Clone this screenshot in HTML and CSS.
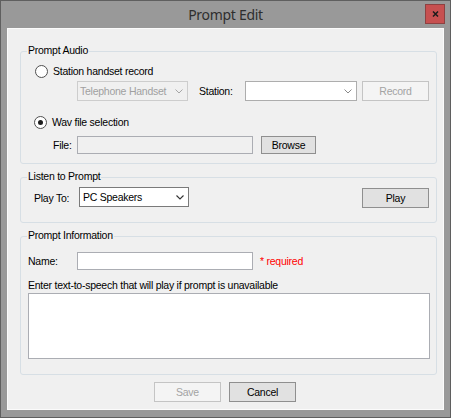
FILE: index.html
```html
<!DOCTYPE html>
<html>
<head>
<meta charset="utf-8">
<link rel="stylesheet" href="styles.css">
</head>
<body>
<div class="window">
  <div class="titlebar">
    <div class="title">Prompt Edit</div>
    <div class="close">
      <svg width="7" height="6" viewBox="0 0 7 6"><path d="M1 0.5 L6 5.5 M6 0.5 L1 5.5" stroke="#1c1c1c" stroke-width="1.5" fill="none"/></svg>
    </div>
  </div>
  <div class="client">
    <div class="group g1">
      <span class="legend">Prompt Audio</span>
      <div class="row radio-row r1"><span class="radio"></span><span>Station handset record</span></div>
      <div class="row combo-row">
        <div class="combo disabled w-tel"><span>Telephone Handset</span><svg class="chev" width="8" height="5" viewBox="0 0 8 5"><polyline points="0.5,0.5 4,4 7.5,0.5" fill="none" stroke="#a6a6a6" stroke-width="1"/></svg></div>
        <span class="lbl lbl-station">Station:</span>
        <div class="combo w-station"><span></span><svg class="chev" width="8" height="5" viewBox="0 0 8 5"><polyline points="0.5,0.5 4,4 7.5,0.5" fill="none" stroke="#8a8a8a" stroke-width="1"/></svg></div>
        <div class="btn disabled btn-record">Record</div>
      </div>
      <div class="row radio-row r2"><span class="radio checked"><span class="dot"></span></span><span>Wav file selection</span></div>
      <div class="row file-row">
        <span class="lbl lbl-file">File:</span>
        <div class="tb ro w-file"></div>
        <div class="btn btn-browse">Browse</div>
      </div>
    </div>

    <div class="group g2">
      <span class="legend">Listen to Prompt</span>
      <div class="row play-row">
        <span class="lbl lbl-play">Play To:</span>
        <div class="combo dark w-play"><span>PC Speakers</span><svg class="chev" width="8" height="5" viewBox="0 0 8 5"><polyline points="0.5,0.5 4,4 7.5,0.5" fill="none" stroke="#333" stroke-width="1.1"/></svg></div>
        <div class="btn btn-play">Play</div>
      </div>
    </div>

    <div class="group g3">
      <span class="legend">Prompt Information</span>
      <div class="row name-row">
        <span class="lbl lbl-name">Name:</span>
        <div class="tb w-name"></div>
        <span class="required">* required</span>
      </div>
      <div class="tts-label">Enter text-to-speech that will play if prompt is unavailable</div>
      <div class="tb textarea"></div>
    </div>

    <div class="actions">
      <div class="btn disabled">Save</div>
      <div class="btn">Cancel</div>
    </div>
  </div>
</div>
</body>
</html>
```

FILE: styles.css
```css
body {
  margin: 0;
}

.window {
  width: 451px;
  height: 418px;
  box-sizing: border-box;
  border: 1px solid #5f5f5f;
  background: #999999;
  display: flex;
  flex-direction: column;
  font-family: "Liberation Sans", Arial, sans-serif;
  font-size: 10.5px;
  letter-spacing: -0.25px;
  color: #000;
}

.titlebar {
  height: 27px;
  flex: none;
  display: grid;
  grid-template-columns: 1fr auto 1fr;
  align-items: start;
}

.title {
  grid-column: 2;
  font-family: "Noto Sans", "Open Sans", sans-serif;
  font-size: 14px;
  letter-spacing: -0.3px;
  line-height: 27px;
  color: #2e2e2e;
}

.close {
  grid-column: 3;
  justify-self: end;
  margin: 3px 5px 0 0;
  width: 20px;
  height: 20px;
  box-sizing: border-box;
  border: 1px solid #8e4141;
  background: #c75050;
  display: flex;
  align-items: center;
  justify-content: center;
}

.client {
  flex: none;
  margin: 0 6px;
  height: 382px;
  box-sizing: border-box;
  border: 1px solid #fbfbfb;
  background: #f0f0f0;
  padding: 22px 6px 0 12px;
}

.group {
  position: relative;
  border: 1px solid #d7dfe5;
  border-radius: 3px;
}

.legend {
  position: absolute;
  left: 6px;
  top: -8px;
  padding: 0 1px;
  background: #f0f0f0;
  line-height: 13px;
  white-space: nowrap;
}

.row {
  display: flex;
  align-items: center;
  white-space: nowrap;
}

/* Prompt Audio */
.g1 {
  padding: 12px 7px 9px 0;
}

.radio-row {
  height: 14px;
  line-height: 13px;
}

.r1 {
  padding-left: 14px;
}

.r2 {
  margin-top: 14px;
  padding-left: 13px;
}

.radio {
  width: 13px;
  height: 13px;
  box-sizing: border-box;
  border: 1px solid #505050;
  border-radius: 50%;
  background: #fff;
  margin-right: 5px;
  display: flex;
  align-items: center;
  justify-content: center;
}

.dot {
  width: 5px;
  height: 5px;
  border-radius: 50%;
  background: #1e1e1e;
}

.combo-row {
  margin-top: 3px;
  height: 20px;
  padding-left: 56px;
}

.combo {
  box-sizing: border-box;
  height: 20px;
  border: 1px solid #adadad;
  background: #fff;
  display: flex;
  align-items: center;
  justify-content: space-between;
  padding: 0 4px 0 2px;
  line-height: 13px;
}

.combo.disabled {
  border-color: #cdcdcd;
  background: #f0f0f0;
  color: #a0a0a0;
}

.combo.dark {
  border-color: #7a7a7a;
}

.chev {
  flex: none;
}

.w-tel {
  width: 111px;
}

.lbl-station {
  width: 57px;
  box-sizing: border-box;
  padding-left: 11px;
}

.w-station {
  width: 112px;
}

.btn {
  box-sizing: border-box;
  width: 67px;
  height: 20px;
  border: 1px solid #8f8f8f;
  background: #e1e1e1;
  display: flex;
  align-items: center;
  justify-content: center;
  line-height: 13px;
  color: #000;
}

.btn.disabled {
  border-color: #c4c4c4;
  background: #f4f4f4;
  color: #a3a3a3;
}

.btn-record {
  margin-left: 5px;
}

.file-row {
  margin-top: 7px;
  height: 18px;
  padding-left: 32px;
}

.lbl-file {
  width: 24px;
}

.tb {
  box-sizing: border-box;
  height: 18px;
  border: 1px solid #abadb3;
  background: #fff;
}

.tb.ro {
  background: #f0f0f0;
}

.w-file {
  width: 176px;
  margin-right: 8px;
}

.btn-browse {
  width: 55px;
  height: 18px;
}

/* Listen to Prompt */
.g2 {
  margin-top: 13px;
  padding: 9px 7px 14px 13px;
}

.play-row {
  height: 21px;
  align-items: flex-start;
}

.lbl-play {
  width: 45px;
  align-self: center;
}

.w-play {
  width: 110px;
  padding-left: 3px;
}

.btn-play {
  margin-left: auto;
  align-self: flex-end;
}

/* Prompt Information */
.g3 {
  margin-top: 13px;
  padding: 15px 6px 15px 7px;
}

.name-row {
  height: 18px;
}

.lbl-name {
  width: 49px;
}

.w-name {
  width: 176px;
}

.required {
  margin-left: 7px;
  color: #ff0000;
}

.tts-label {
  margin-top: 9px;
  height: 12px;
  line-height: 12px;
  white-space: nowrap;
}

.textarea {
  margin-top: 2px;
  width: 402px;
  height: 66px;
}

.actions {
  margin-top: 7px;
  display: flex;
  justify-content: center;
  gap: 8px;
  padding-right: 7px;
}
```
